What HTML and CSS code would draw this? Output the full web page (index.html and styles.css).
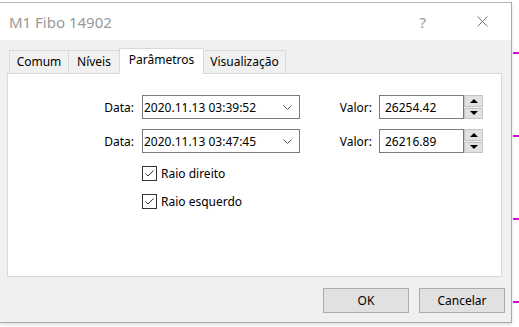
FILE: index.html
```html
<!DOCTYPE html>
<html lang="pt">
<head>
<meta charset="utf-8">
<title>M1 Fibo 14902</title>
<link rel="stylesheet" href="styles.css">
</head>
<body>
<div class="window">
  <div class="titlebar">
    <span class="title">M1 Fibo 14902</span>
    <span class="help">?</span>
    <svg class="close" width="11" height="11" viewBox="0 0 11 11"><path d="M0.5 0.5L10.5 10.5M10.5 0.5L0.5 10.5" stroke="#777" stroke-width="1" fill="none"/></svg>
  </div>
  <div class="content">
    <div class="tabs">
      <div class="tab t-comum">Comum</div>
      <div class="tab t-niveis">Níveis</div>
      <div class="tab active t-param">Parâmetros</div>
      <div class="tab t-visual">Visualização</div>
    </div>
    <div class="panel">
      <div class="row">
        <label class="lbl-data">Data:</label>
        <div class="combo"><span>2020.11.13 03:39:52</span><svg width="9" height="5" viewBox="0 0 9 5"><path d="M0.5 0.5L4.5 4.5L8.5 0.5" stroke="#555" stroke-width="1" fill="none"/></svg></div>
        <label class="lbl-valor">Valor:</label>
        <div class="num">26254.42</div>
        <div class="spin"><div class="sbtn"><i class="up"></i></div><div class="sbtn"><i class="down"></i></div></div>
      </div>
      <div class="row">
        <label class="lbl-data">Data:</label>
        <div class="combo"><span>2020.11.13 03:47:45</span><svg width="9" height="5" viewBox="0 0 9 5"><path d="M0.5 0.5L4.5 4.5L8.5 0.5" stroke="#555" stroke-width="1" fill="none"/></svg></div>
        <label class="lbl-valor">Valor:</label>
        <div class="num">26216.89</div>
        <div class="spin"><div class="sbtn"><i class="up"></i></div><div class="sbtn"><i class="down"></i></div></div>
      </div>
      <div class="checks">
        <div class="check"><span class="box"><svg width="13" height="13" viewBox="0 0 13 13"><path d="M2.5 6.5L5 9L10.5 3.5" stroke="#333" stroke-width="1" fill="none"/></svg></span>Raio direito</div>
        <div class="check"><span class="box"><svg width="13" height="13" viewBox="0 0 13 13"><path d="M2.5 6.5L5 9L10.5 3.5" stroke="#333" stroke-width="1" fill="none"/></svg></span>Raio esquerdo</div>
      </div>
    </div>
    <div class="buttons">
      <button class="btn">OK</button>
      <button class="btn">Cancelar</button>
    </div>
  </div>
</div>
<div class="chart">
  <i class="mark m1"></i><i class="mark m2"></i><i class="mark m3"></i><i class="mark m4"></i>
</div>
</body>
</html>
```
FILE: styles.css
```css
html, body { margin: 0; padding: 0; }
body {
  background: #fff;
  display: flex;
  align-items: flex-start;
  font-family: "Noto Sans", "Open Sans", sans-serif;
  font-size: 12px;
  color: #000;
  width: 519px;
  height: 327px;
  overflow: hidden;
}
.window {
  margin-top: 2px;
  width: 511px;
  border-top: 1px solid #b4b4b4;
  border-right: 1px solid #aaa;
  border-bottom: 1px solid #aaa;
  box-shadow: 0 2px 3px rgba(0,0,0,0.12);
  background: #f0f0f0;
  flex: none;
}
.titlebar {
  height: 37px;
  background: #fff;
  display: flex;
  align-items: center;
  padding-left: 9px;
}
.title { font-size: 15px; color: #999; flex: 1; }
.help { font-size: 15px; color: #999; margin-right: 51px; }
.close { margin-right: 23px; }
.content {
  height: 282px;
  padding: 8px 0 0 7px;
  box-sizing: border-box;
}
.tabs {
  display: flex;
  align-items: flex-end;
  height: 25px;
  margin-left: 2px;
  position: relative;
  z-index: 1;
}
.tab {
  height: 23px;
  box-sizing: border-box;
  border: 1px solid #d9d9d9;
  border-bottom: none;
  border-right: none;
  background: #f0f0f0;
  display: flex;
  align-items: center;
  justify-content: center;
  padding-bottom: 1px;
}
.t-comum { width: 59px; }
.t-niveis { width: 51px; }
.t-visual { width: 82px; border-right: 1px solid #d9d9d9; }
.t-param { width: 85px; }
.tab.active {
  height: 26px;
  margin-bottom: -1px;
  background: #fff;
  border-right: 1px solid #d9d9d9;
  padding-bottom: 4px;
}
.tab.active + .tab { border-left: none; }
.panel {
  width: 495px;
  height: 204px;
  box-sizing: border-box;
  border: 1px solid #d9d9d9;
  background: #fff;
  padding-top: 21px;
}
.row {
  display: flex;
  align-items: center;
  height: 24px;
  margin-bottom: 10px;
}
.lbl-data { width: 126px; text-align: right; margin-right: 8px; }
.lbl-valor { width: 72px; text-align: right; margin-right: 7px; }
.combo {
  width: 158px;
  height: 24px;
  box-sizing: border-box;
  border: 1px solid #7a7a7a;
  display: flex;
  align-items: center;
  justify-content: space-between;
  padding: 0 7px 0 1px;
}
.combo svg { margin-top: 1px; }
.num {
  width: 85px;
  height: 24px;
  box-sizing: border-box;
  border: 1px solid #7a7a7a;
  display: flex;
  align-items: center;
  padding-left: 5px;
}
.spin {
  width: 19px;
  height: 24px;
  display: flex;
  flex-direction: column;
  gap: 1px;
  background: #f0f0f0;
}
.sbtn {
  flex: 1;
  background: #e1e1e1;
  border: 1px solid #c4c4c4;
  display: flex;
  align-items: center;
  justify-content: center;
}
.sbtn i { width: 0; height: 0; border-left: 4px solid transparent; border-right: 4px solid transparent; }
.sbtn .up { border-bottom: 4px solid #000; }
.sbtn .down { border-top: 4px solid #000; }
.checks {
  padding-left: 134px;
  padding-top: 3px;
  display: flex;
  flex-direction: column;
  gap: 13px;
}
.check { display: flex; align-items: center; height: 15px; }
.box {
  width: 15px;
  height: 15px;
  box-sizing: border-box;
  border: 1px solid #333;
  margin-right: 4px;
  display: flex;
  align-items: center;
  justify-content: center;
  background: #fff;
}
.buttons {
  display: flex;
  justify-content: flex-end;
  gap: 10px;
  margin-top: 11px;
  padding-right: 6px;
}
.btn {
  width: 86px;
  height: 25px;
  background: #e1e1e1;
  border: 1px solid #adadad;
  font-family: inherit;
  font-size: 12px;
  color: #000;
  padding: 0;
}
.chart { position: relative; flex: 1; height: 327px; }
.mark { position: absolute; left: 1px; right: 0; height: 2px; background: #e600e6; }
.m1 { top: 52px; }
.m2 { top: 135px; }
.m3 { top: 218px; }
.m4 { top: 301px; }
```
